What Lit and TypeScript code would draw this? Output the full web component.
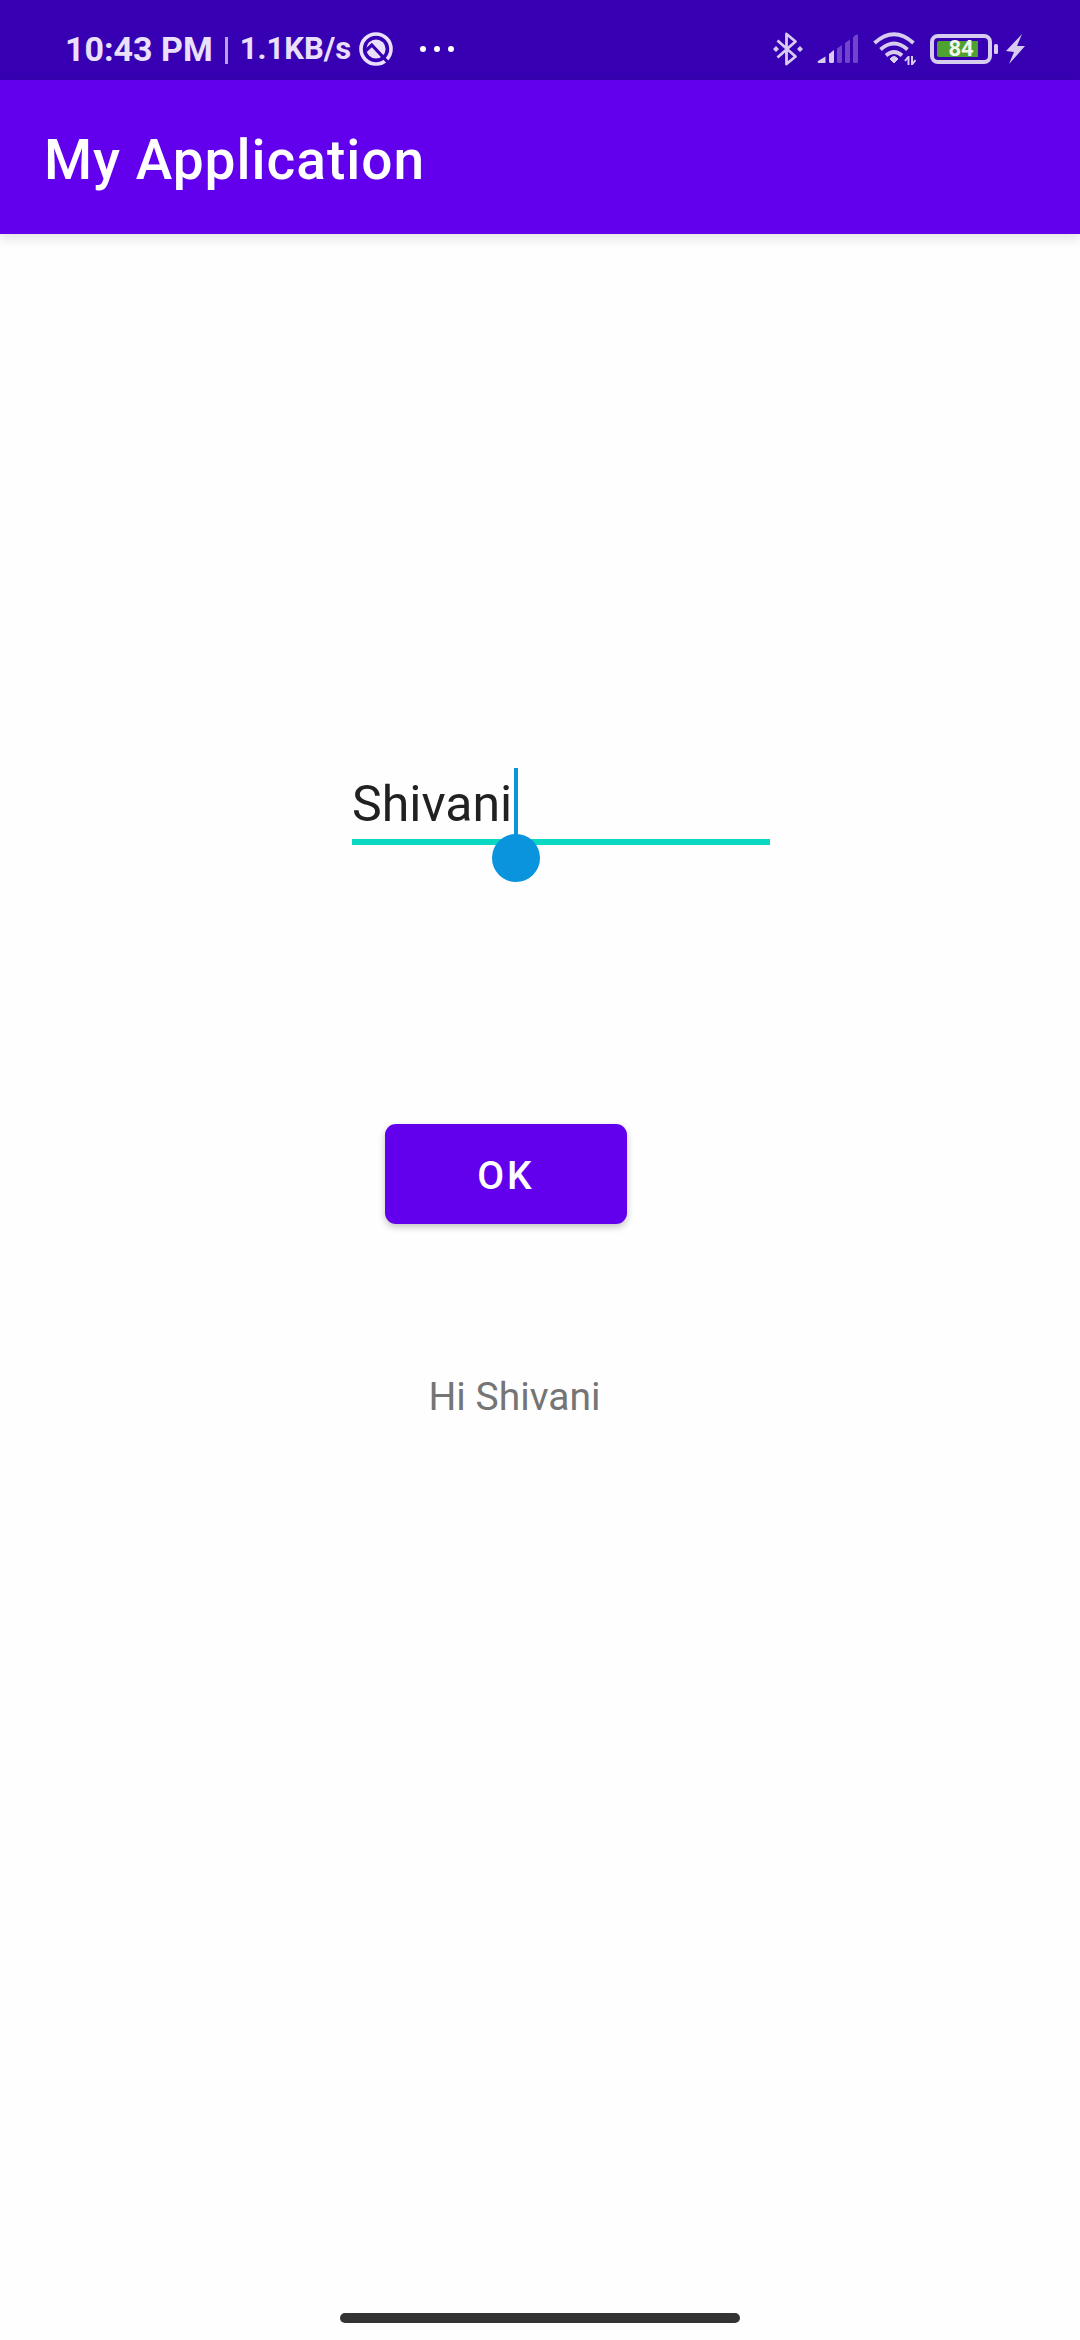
import { LitElement, html, css } from "lit";
import { customElement, state } from "lit/decorators.js";

@customElement("status-bar")
class StatusBar extends LitElement {
  static styles = css`
    :host {
      display: block;
      background: #3700b3;
      color: #ebe0fb;
    }
    .bar {
      display: flex;
      align-items: center;
      justify-content: space-between;
      height: 80px;
      padding: 18px 55px 0 65px;
      box-sizing: border-box;
    }
    .side {
      display: flex;
      align-items: center;
    }
    .clock {
      font-size: 34px;
      line-height: 40px;
      font-weight: 700;
      white-space: pre;
    }
    .rule {
      width: 3px;
      height: 27px;
      margin: 2px 12px 0;
      background: #b9a2e4;
    }
    .speed {
      font-size: 31px;
      line-height: 40px;
      font-weight: 700;
    }
    .badge {
      margin-left: 8px;
    }
    .dots {
      margin-left: 27px;
    }
    .status {
      gap: 14px;
    }
    .power {
      display: flex;
      align-items: center;
      gap: 8px;
    }
    .battery {
      position: relative;
      display: flex;
    }
    .level {
      position: absolute;
      inset: 0 6px 0 0;
      display: flex;
      align-items: center;
      justify-content: center;
      color: #f2f7ee;
      font-size: 22px;
      line-height: 30px;
      font-weight: 700;
    }
    svg {
      display: block;
    }
  `;

  render() {
    return html`
      <div class="bar">
        <div class="side">
          <span class="clock">10:43 PM</span>
          <span class="rule"></span>
          <span class="speed">1.1KB/s</span>
          <svg class="badge" width="34" height="34" viewBox="0 0 34 34" aria-hidden="true">
            <circle cx="17" cy="17" r="15" fill="none" stroke="#ebe0fb" stroke-width="3.6" />
            <circle cx="17" cy="17" r="9.6" fill="#ebe0fb" />
            <path d="M7 18.500L12.800 13L30 31.500" fill="none" stroke="#3700b3" stroke-width="3.2" />
          </svg>
          <svg class="dots" width="34" height="6" viewBox="0 0 34 6" aria-hidden="true">
            <circle cx="3" cy="3" r="3" fill="#fff" />
            <circle cx="17" cy="3" r="3" fill="#fff" />
            <circle cx="31" cy="3" r="3" fill="#fff" />
          </svg>
        </div>
        <div class="side status">
          <svg width="30" height="34" viewBox="0 0 30 34" aria-hidden="true">
            <path
              d="M4.5 8.5L22.5 24.5L13.5 32V2L22.5 9.5L4.5 25.5"
              fill="none"
              stroke="#d7ccf0"
              stroke-width="2.8"
              stroke-linejoin="round"
            />
            <path d="M3 14l3 3-3 3-3-3zM27 14l3 3-3 3-3-3z" fill="#d7ccf0" />
          </svg>
          <svg width="42" height="30" viewBox="0 0 42 30" aria-hidden="true">
            <path d="M1 27L8.5 22.5V29H1.5Q0 29 1 27Z" fill="#d7ccf0" />
            <path d="M12 20L17 16V28L16 29H13L12 28Z" fill="#d7ccf0" />
            <path
              d="M20 14.5L25 11V28L24 29H21L20 28ZM28 9L33 5.500V28L32 29H29L28 28ZM36 3.500Q38 0 41 .5V28L40 29H37L36 28Z"
              fill="#6f45c9"
            />
          </svg>
          <svg width="43" height="34" viewBox="0 0 43 34" aria-hidden="true">
            <g fill="none" stroke="#d7ccf0" stroke-width="3.8">
              <path d="M1.500 11Q21 -6.500 40.500 11" />
              <path d="M7.500 17.500Q21 5.500 34.500 17.500" />
              <path d="M13 23.500Q21 16.500 29 23.500" />
            </g>
            <path d="M21 31L17 27Q21 22 25 27Z" fill="#d7ccf0" stroke="#d7ccf0" />
            <path
              d="M35.500 24V33M35.500 24.500L32 29M39 24V33M39 32.500L42.500 28"
              fill="none"
              stroke="#d7ccf0"
              stroke-width="2"
            />
          </svg>
          <div class="power">
            <div class="battery">
              <svg width="68" height="30" viewBox="0 0 68 30" aria-hidden="true">
                <rect x="2" y="2" width="58" height="26" rx="6" fill="none" stroke="#d7ccf0" stroke-width="4" />
                <path d="M9 7H48V23H9Q7 23 7 21V9Q7 7 9 7Z" fill="#4fa22f" />
                <rect x="64" y="10" width="4" height="10" rx="1.500" fill="#d7ccf0" />
              </svg>
              <span class="level">84</span>
            </div>
            <svg width="19" height="30" viewBox="0 0 19 30" aria-hidden="true">
              <path d="M16 0L0 17L8 18L3 30L19 12L11 12Z" fill="#d7ccf0" />
            </svg>
          </div>
        </div>
      </div>
    `;
  }
}

@customElement("app-root")
class AppRoot extends LitElement {
  @state() private name = "Shivani";
  @state() private greeting = "Hi Shivani";

  static styles = css`
    :host {
      display: flex;
      flex-direction: column;
      min-height: 100vh;
      background: #fefefe;
      font-family: Roboto, "Liberation Sans", sans-serif;
    }
    .app-bar {
      position: relative;
      display: flex;
      align-items: center;
      height: 154px;
      padding: 6px 44px 0;
      box-sizing: border-box;
      background: #6200ee;
      box-shadow: 0 4px 12px rgba(0, 0, 0, 0.12);
    }
    .title {
      margin: 0;
      color: #fff;
      font-size: 55px;
      line-height: 64px;
      font-weight: 500;
      letter-spacing: 1px;
    }
    .content {
      display: flex;
      flex: 1;
      flex-direction: column;
      padding-top: 534px;
    }
    .row {
      display: grid;
    }
    .row-field {
      grid-template-columns: 352fr 418px 310fr;
    }
    .row-action {
      grid-template-columns: 385fr 242px 453fr;
      margin-top: 279px;
    }
    .row-greeting {
      grid-template-columns: 429fr auto 480fr;
      margin-top: 149px;
    }
    .field,
    .ok,
    .greeting {
      grid-column: 2;
    }
    .field {
      position: relative;
    }
    .name {
      display: block;
      width: 100%;
      height: 77px;
      padding: 2px 0;
      box-sizing: border-box;
      border: 0;
      border-bottom: 6px solid #0bd8c3;
      border-radius: 0;
      outline: none;
      background: transparent;
      color: #212121;
      caret-color: transparent;
      font: 400 50px/66px Roboto, "Liberation Sans", sans-serif;
    }
    .caret {
      position: absolute;
      top: 0;
      left: 162px;
      width: 4px;
      height: 68px;
      background: #0a94dd;
    }
    .handle {
      position: absolute;
      top: 66px;
      left: 140px;
      width: 48px;
      height: 48px;
      border-radius: 50%;
      background: #0a94dd;
    }
    .ok {
      height: 100px;
      padding: 4px 0 0;
      border: 0;
      border-radius: 11px;
      background: #6200ee;
      color: #fff;
      font: 500 39px/48px Roboto, "Liberation Sans", sans-serif;
      letter-spacing: 3px;
      box-shadow: 0 3px 7px rgba(0, 0, 0, 0.24);
    }
    .greeting {
      margin: 0;
      color: #757575;
      font-size: 39px;
      line-height: 48px;
      white-space: nowrap;
    }
    .home {
      display: flex;
      justify-content: center;
      padding-bottom: 17px;
    }
    .pill {
      width: 37%;
      height: 10px;
      border-radius: 5px;
      background: #333;
    }
  `;

  private onInput(e: Event) {
    this.name = (e.target as HTMLInputElement).value;
  }

  private greet() {
    this.greeting = `Hi ${this.name}`;
  }

  render() {
    return html`
      <status-bar></status-bar>
      <header class="app-bar"><h1 class="title">My Application</h1></header>
      <main class="content">
        <div class="row row-field">
          <div class="field">
            <input class="name" type="text" aria-label="Name" spellcheck="false" .value=${this.name} @input=${this.onInput} />
            <span class="caret"></span>
            <span class="handle"></span>
          </div>
        </div>
        <div class="row row-action">
          <button class="ok" type="button" @click=${this.greet}>OK</button>
        </div>
        <div class="row row-greeting">
          <p class="greeting">${this.greeting}</p>
        </div>
      </main>
      <footer class="home"><span class="pill"></span></footer>
    `;
  }
}
